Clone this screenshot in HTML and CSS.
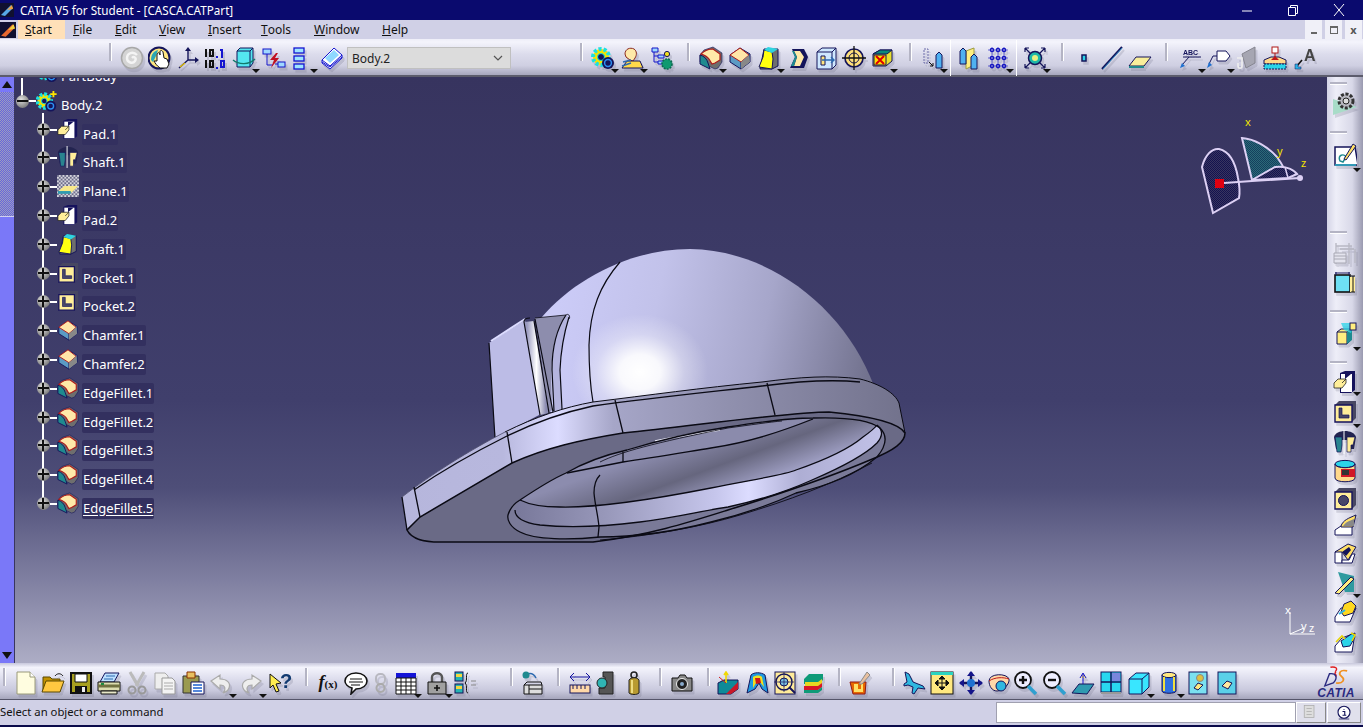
FILE: index.html
```html
<!DOCTYPE html>
<html lang="en">
<head>
<meta charset="utf-8">
<title>CATIA V5 for Student - [CASCA.CATPart]</title>
<link rel="stylesheet" href="styles.css">
</head>
<body>
<svg class="defs" width="0" height="0" aria-hidden="true">
<defs>
<pattern id="dith" width="4" height="4" patternUnits="userSpaceOnUse"><rect width="4" height="4" fill="#d4d4dc"/><rect width="2" height="2" fill="#6c6c8a"/><rect x="2" y="2" width="2" height="2" fill="#6c6c8a"/></pattern>
<pattern id="dithN" width="2" height="2" patternUnits="userSpaceOnUse"><rect width="2" height="2" fill="#38355f"/><rect width="1" height="1" fill="#14124f"/><rect x="1" y="1" width="1" height="1" fill="#14124f"/></pattern>
<pattern id="dithT" width="2" height="2" patternUnits="userSpaceOnUse"><rect width="2" height="2" fill="#2c6a78"/><rect width="1" height="1" fill="#143f5e"/><rect x="1" y="1" width="1" height="1" fill="#143f5e"/></pattern>
</defs>
<symbol id="spiral" viewBox="0 0 24 24"><circle cx="12" cy="12" r="10.5" fill="#d4d4d4" stroke="#a8a8a8" stroke-width="1.500"/><path d="M12 12c2-2 5 0 3 3s-8 2-8-3 6-7 10-3" fill="none" stroke="#f4f4f4" stroke-width="2.400"/></symbol>
<symbol id="hand" viewBox="0 0 24 24"><circle cx="11" cy="12" r="10.500" fill="#ffe680" stroke="#14145a" stroke-width="2"/><path d="M3 14c0-6 3-9 7-10l-2 6-3 6z" fill="#2ba7b5"/><path d="M12 22c-3-2-5-5-6-7l3 0V9c0-3 3-3 3 0V6c0-2 2-2 3 0l1 6 3 1 2 5-2 4z" fill="#fff" stroke="#111" stroke-width="1"/></symbol>
<symbol id="axes" viewBox="0 0 24 24"><path d="M12 14V3M12 14h9M12 14L3 22" fill="none" stroke="#14145a" stroke-width="1.400"/><path d="M12 1l-3 4h6zM23 14l-4-3v6z" fill="#14145a"/><path d="M4 21l5-4" stroke="#e6c200" stroke-width="1.200"/></symbol>
<symbol id="tennum" viewBox="0 0 24 24"><path d="M2 3h2v8H2zM6 3h5v8H6zM8 5v4h1V5zM2 14h2v8H2zM6 14h5v8H6zM8 16v4h1v-4z" fill="#111" fill-rule="evenodd"/><path d="M13 10h2v2h-2zM17 3h3v9h-2V5h-1zM13 21h2v2h-2zM17 14h5v8h-5zM19 16v4h1v-4z" fill="#1616d0" fill-rule="evenodd"/></symbol>
<symbol id="cyanbox" viewBox="0 0 24 24"><path d="M5 5l3-3h13v15l-3 4H5z" fill="#54e6f0" stroke="#14145a"/><path d="M5 5h13v16M18 5l3-3" fill="none" stroke="#14145a"/><path d="M1 14c6 5 16 5 22-1" fill="none" stroke="#127a6c" stroke-width="1.400"/></symbol>
<symbol id="bolt" viewBox="0 0 24 24"><rect x="1" y="3" width="8" height="5" fill="#9fd8ff" stroke="#1414c8"/><rect x="16" y="16" width="7" height="5" fill="#9fd8ff" stroke="#1414c8"/><path d="M5 8v11h6M16 18h-3" fill="none" stroke="#1414c8"/><path d="M14 7l-6 7h4l-3 8 8-10h-4l3-5z" fill="#c01020"/></symbol>
<symbol id="stack" viewBox="0 0 24 24"><g fill="#9fe4ff" stroke="#1414d0" stroke-width="1.300"><rect x="4" y="2" width="10" height="5"/><rect x="4" y="10" width="10" height="5"/><rect x="4" y="18" width="10" height="5"/></g></symbol>
<symbol id="book" viewBox="0 0 24 24"><path d="M2 14L14 2l8 7v3L10 23 2 17z" fill="#fff" stroke="#1414d0"/><path d="M2 14l8 6L22 9M2 16l8 5 12-10" fill="none" stroke="#1414d0"/><path d="M5 12l9-8 5 5-9 8z" fill="#8fd8ff"/></symbol>
<symbol id="gearc" viewBox="0 0 24 24"><circle cx="10" cy="11" r="8" fill="#f4e400" stroke="#1be0e0" stroke-width="4" stroke-dasharray="3 2"/><circle cx="10" cy="11" r="3.500" fill="#14145a" stroke="#1be0e0"/><circle cx="17" cy="17" r="6" fill="#14145a"/><circle cx="17" cy="17" r="3.400" fill="#14145a" stroke="#2d8df0" stroke-width="1.500"/></symbol>
<symbol id="bodygear" viewBox="0 0 24 24"><circle cx="9" cy="12" r="7.500" fill="#f4e400" stroke="#1be0e0" stroke-width="4" stroke-dasharray="3 2"/><circle cx="9" cy="12" r="3" fill="#14145a" stroke="#1be0e0"/><circle cx="16" cy="17.500" r="6" fill="#14145a"/><circle cx="16" cy="17.500" r="3.200" fill="#14145a" stroke="#2d8df0" stroke-width="1.500"/><path d="M19 1v7M15.500 4.500h7" stroke="#ffe600" stroke-width="2"/></symbol>
<symbol id="face" viewBox="0 0 24 24"><path d="M5 8c0-5 5-7 9-5 3 2 3 6 1 9l-2 3-3-1-4-3z" fill="#ffe9a8" stroke="#8a2a20"/><path d="M2 22l5-7h13l3 7z" fill="#ffd94a" stroke="#14145a"/><path d="M3 16l8-2M2 20l9-3" stroke="#2d6ab0" stroke-width="1.500"/></symbol>
<symbol id="treegear" viewBox="0 0 24 24"><path d="M2 2h6v4H2zM8 9h6v3H8zM8 15h6v3H8z" fill="#9fd8ff" stroke="#1414c8"/><path d="M4 6v10h4M4 10h4" fill="none" stroke="#1414c8"/><circle cx="17" cy="8" r="2.600" fill="#f0e020" stroke="#14145a"/><circle cx="17" cy="18" r="5" fill="#0f9a70" stroke="#0a6a50" stroke-width="1.600" stroke-dasharray="2 1"/></symbol>
<symbol id="fillet" viewBox="0 0 24 24"><path d="M1 9l4-5 9-3 9 6v9l-4 6-3 1-15-7z" fill="#6e6e6e" stroke="#14145a" stroke-width=".6"/><path d="M1 9c4 1 7 4 8 8l2 6-10-5z" fill="#1f8a8f" stroke="#14145a"/><path d="M2 8c3-3 8-5 12-5l7 5v6l-5 3-3 1-3-5c-2-3-5-4-8-5z" fill="#ffe9a8" stroke="#b01818" stroke-width="1.200"/></symbol>
<symbol id="solid2" viewBox="0 0 24 24"><path d="M2 9l10-7 10 6v8l-9 7-11-7z" fill="#5b9bc4" stroke="#14145a"/><path d="M2 9l10-7 9 7-8 7z" fill="#ffe6a8" stroke="#b01818"/><path d="M13 16v7" stroke="#14145a"/><path d="M21 9l1 7-9 7v-7z" fill="#888"/></symbol>
<symbol id="solid3" viewBox="0 0 24 24"><path d="M7 3h14v17l-6 3H3z" fill="#6e6e6e" stroke="#14145a"/><path d="M7 4l8 2 1 7-1 10-13-2 4-10z" fill="#ffff10" stroke="#14145a"/><path d="M7 4l4-3 10 2-6 4z" fill="#2fd4e0"/></symbol>
<symbol id="solid4" viewBox="0 0 24 24"><path d="M6 3h12l4 8-4 11H4l5-11z" fill="#14145a"/><path d="M8 5h6l4 6-4 9H8l3-9z" fill="#ffe9a8"/><path d="M6 5l2 0 3 6-3 9H5l4-9z" fill="#1f8a8f"/></symbol>
<symbol id="grid3d" viewBox="0 0 24 24"><path d="M3 6l5-4h14v17l-4 4H3z" fill="#cfe8ff" stroke="#14145a"/><path d="M3 6h15v17M18 6l4-4" fill="none" stroke="#14145a"/><path d="M7 10h4v9H7z" fill="#ffe680" stroke="#14145a"/><path d="M8 14h12M17 11l3 3-3 3" fill="none" stroke="#2d6ab0" stroke-width="1.400"/></symbol>
<symbol id="target" viewBox="0 0 24 24"><circle cx="12" cy="12" r="9" fill="#ffe07a" stroke="#14145a" stroke-width="1.600"/><circle cx="12" cy="12" r="5" fill="none" stroke="#14145a"/><path d="M12 0v24M0 12h24" stroke="#111" stroke-width="1.300"/></symbol>
<symbol id="cubex" viewBox="0 0 24 24"><path d="M3 8l7-4h12v11l-6 5H3z" fill="#e8e030" stroke="#14145a"/><path d="M3 8h14l5-4H10z" fill="#0b8a78" stroke="#14145a"/><path d="M4 9h12v10H4z" fill="#ffe000" stroke="#14145a"/><path d="M6 10l8 8M14 10l-8 8" stroke="#d00" stroke-width="2"/></symbol>
<symbol id="dashed" viewBox="0 0 24 24"><path d="M4 3h4v14H4z" fill="none" stroke="#6a6aa8" stroke-dasharray="2 1"/><path d="M16 9l3-3 3 3v13h-6z" fill="#4fb0f0" stroke="#14145a"/><path d="M9 16l4 4M13 17v3h-3" stroke="#111" fill="none"/></symbol>
<symbol id="planes" viewBox="0 0 24 24"><path d="M8 5l8-3v17l-8 4z" fill="#ffee80" stroke="#9a9a40"/><path d="M2 5l3-3 3 3v13H2z" fill="#4fb0f0" stroke="#14145a"/><path d="M13 11l3-3 3 3v12h-6z" fill="#4fb0f0" stroke="#14145a"/></symbol>
<symbol id="dots" viewBox="0 0 24 24"><path d="M2 4h20M2 12h20M2 20h20M6 1v22M12 1v22M18 1v22" stroke="#1414c0" fill="none" stroke-width=".6"/><g fill="none" stroke="#1414c0" stroke-width="1.200"><circle cx="6" cy="4" r="1.700"/><circle cx="12" cy="4" r="1.700"/><circle cx="18" cy="4" r="1.700"/><circle cx="6" cy="12" r="1.700"/><circle cx="12" cy="12" r="1.700"/><circle cx="18" cy="12" r="1.700"/><circle cx="6" cy="20" r="1.700"/><circle cx="12" cy="20" r="1.700"/><circle cx="18" cy="20" r="1.700"/></g></symbol>
<symbol id="center" viewBox="0 0 24 24"><path d="M2 2l5 5M22 2l-5 5M2 22l5-5M22 22l-5-5M2 2h4M2 2v4M22 2h-4M22 2v4M2 22h4M2 22v-4M22 22h-4M22 22v-4" stroke="#14145a" fill="none" stroke-width="1.200"/><circle cx="12" cy="12" r="6.500" fill="#1fb8a8" stroke="#14145a" stroke-width="1.500"/><circle cx="12" cy="12" r="3" fill="#e8f080"/></symbol>
<symbol id="point" viewBox="0 0 24 24"><rect x="10" y="9" width="4" height="6" fill="#2bd4e8" stroke="#14145a" stroke-width="1.500"/></symbol>
<symbol id="line" viewBox="0 0 24 24"><path d="M2 23L22 1" stroke="#14145a" stroke-width="2"/><path d="M3 23L22 2" stroke="#2bb4e8" stroke-width=".7"/></symbol>
<symbol id="plane" viewBox="0 0 24 24"><path d="M1 20l7-9h15l-7 9z" fill="#f8ee9a" stroke="#14145a"/><path d="M1 21h15" stroke="#1f8a8f" stroke-width="2"/></symbol>
<symbol id="flag" viewBox="0 0 24 24"><path d="M10 5h9l4 5-4 5h-9z" fill="#fff" stroke="#14145a"/><path d="M10 10H6L2 18" stroke="#14145a" fill="none"/><path d="M0 22l2-6 3 3z" fill="#1f70d0"/></symbol>
<symbol id="graybolt" viewBox="0 0 24 24"><path d="M8 8l13-7v16l-9 5z" fill="#a6a6b2" stroke="#85858f"/><path d="M3 12h5v8c0 3-4 3-4 0v-3" fill="none" stroke="#eee" stroke-width="1.600"/></symbol>
<symbol id="stamp" viewBox="0 0 24 24"><rect x="9" y="1" width="6" height="6" fill="#fff" stroke="#b01818"/><path d="M12 7v5" stroke="#b01818"/><path d="M1 14l7-3h8l7 3v4H1z" fill="#ffd88a" stroke="#14145a"/><path d="M8 14l4-4 4 4z" fill="#c01818"/><rect x="1" y="18" width="22" height="5" fill="#2bd4e8" stroke="#14145a" stroke-dasharray="2 1"/></symbol>
<symbol id="gearg" viewBox="0 0 24 24"><path d="M0 8l24 8-24 8z" fill="#a8dcc8"/><circle cx="13" cy="10" r="7" fill="#b8b8c0" stroke="#333" stroke-width="3" stroke-dasharray="3 1.600"/><circle cx="13" cy="10" r="3" fill="#ddd" stroke="#222"/></symbol>
<symbol id="sketch" viewBox="0 0 24 24"><path d="M2 4h20l3 18H2z" fill="#fff" stroke="#14145a" stroke-width="1.500"/><path d="M7 18c-3-6 4-8 6-4l-3 5z" fill="none" stroke="#1f8a8f" stroke-width="1.500"/><path d="M11 16L20 1l3 2-10 14z" fill="#ffe066" stroke="#14145a"/><path d="M2 22h21" stroke="#2bb4c8" stroke-width="1.500"/></symbol>
<symbol id="graytool" viewBox="0 0 24 24"><path d="M3 2v21M3 5h16M16 2v21M22 8v14M7 8h14" stroke="#b8b8c4" fill="none" stroke-width="1.400"/><path d="M1 12h12v10H1z" fill="#e4e4ee" stroke="#a8a8b4"/><path d="M1 15h12M1 18h12" stroke="#a8a8b4"/></symbol>
<symbol id="cyansq" viewBox="0 0 24 24"><rect x="2" y="5" width="15" height="17" fill="#6ee0f4" stroke="#111" stroke-width="1.600"/><path d="M3 2v3M16 2v3M2 3h15" stroke="#1a1a60"/><rect x="17" y="7" width="5" height="15" fill="#ffee9a"/><path d="M20 6v16M18 6h4M18 22h4" stroke="#111"/></symbol>
<symbol id="cubeflag" viewBox="0 0 24 24"><path d="M4 10l4-3h10v11l-4 4H4z" fill="#ffee80" stroke="#14145a"/><path d="M14 10h-10M14 10v12M14 10l4-3" fill="none" stroke="#14145a"/><path d="M14 10l5-2v10l-5 4z" fill="#1f8a8f"/><path d="M8 1l13 0-3 10-7-3z" fill="#2bd4e8" opacity=".75"/><rect x="17" y="1" width="6" height="7" fill="#ffee80" stroke="#14145a"/></symbol>
<symbol id="pad" viewBox="0 0 24 24"><path d="M7 3l5-2h10v19l-4 3H7z" fill="#15125c"/><path d="M8 4h11v18H8z" fill="#fff"/><path d="M1 13l4-4h8v4l-4 5H1z" fill="#ffee99" stroke="#222" stroke-width=".8"/><path d="M9 13l4-4" stroke="#222" stroke-width=".8"/><path d="M12 4h6l-6 5z" fill="#15125c"/></symbol>
<symbol id="pocket" viewBox="0 0 24 24"><path d="M2 5l4-4h17v17l-4 4H2z" fill="#474762"/><path d="M2 5h17v17H2z" fill="#ffee99" stroke="#15125c" stroke-width="1.400"/><path d="M6 8h3v7h7v3H6z" fill="#474768" stroke="#15125c" stroke-width=".7"/></symbol>
<symbol id="shaft" viewBox="0 0 24 24"><path d="M1 7c2-8 20-8 22 0l-2 12h-5l-1-9h-6l-1 9H3z" fill="#232450"/><path d="M2 7h7v8l-1 7H4z" fill="#29848f" stroke="#14145a" stroke-width=".7"/><path d="M14 7h8l-2 8h-2v7h-4z" fill="#ffee99" stroke="#14145a" stroke-width=".7"/><path d="M11 0v24" stroke="#fff"/></symbol>
<symbol id="groove" viewBox="0 0 24 24"><ellipse cx="12" cy="5" rx="10" ry="3.600" fill="#2bd4e8" stroke="#14145a"/><path d="M2 5v14c0 5 20 5 20 0V5c0 5-20 5-20 0z" fill="#ffd88a" stroke="#14145a"/><path d="M8 10h14v8H8z" fill="#d01828"/><path d="M9 11h7v5H9z" fill="#333"/></symbol>
<symbol id="hole" viewBox="0 0 24 24"><path d="M2 5l4-4h17v17l-4 4H2z" fill="#474762"/><path d="M2 5h17v17H2z" fill="#ffee99" stroke="#15125c" stroke-width="1.400"/><circle cx="10.500" cy="13.500" r="5" fill="#474768" stroke="#15125c"/></symbol>
<symbol id="rib" viewBox="0 0 24 24"><path d="M2 21v-5l6-4 11 0 0 9z" fill="#fff" stroke="#14145a"/><path d="M8 12c2-6 8-8 15-11l-3 12-12 0z" fill="#ffe066" stroke="#14145a"/><path d="M10 12c3-4 6-5 11-7v7z" fill="#888"/></symbol>
<symbol id="slot" viewBox="0 0 24 24"><path d="M2 21V10l7-3 0 14z" fill="#fff" stroke="#14145a"/><path d="M9 21h10l3-9-3 0-3 6H9z" fill="#fff" stroke="#14145a"/><path d="M2 10l13-8 8 3-8 13-6-8z" fill="#ffe066" stroke="#14145a"/><path d="M9 10l7-5 2 3-5 6z" fill="#14145a"/></symbol>
<symbol id="stiff" viewBox="0 0 24 24"><path d="M5 1l16 4v16H12z" fill="#2f9a9f"/><path d="M2 22L18 6l3 2-15 15z" fill="#ffee80" stroke="#14145a"/></symbol>
<symbol id="loft" viewBox="0 0 24 24"><path d="M2 22v-5l6-9 15 0-6 14z" fill="#fff" stroke="#14145a"/><path d="M8 12l3-8 7-3 5 5-3 7-9 3z" fill="#ffd820" stroke="#14145a"/><path d="M6 14l6-4" stroke="#2bb4e8" stroke-width="2"/></symbol>
<symbol id="loft2" viewBox="0 0 24 24"><path d="M2 22v-6l7-8 13-5-3 19z" fill="#fff" stroke="#14145a"/><path d="M8 11l12-8 2 4-5 9-7 1z" fill="#2bd4e8" stroke="#14145a"/><path d="M3 12l6-6 3 3M18 3l4 2-3 6" fill="none" stroke="#e8d400" stroke-width="1.600"/></symbol>
<symbol id="sfile" viewBox="0 0 24 24"><path d="M3 1h13l5 5v17H3z" fill="#fffde0" stroke="#9a9a7a"/><path d="M16 1v5h5" fill="#fff" stroke="#9a9a7a"/></symbol>
<symbol id="sfolder" viewBox="0 0 24 24"><path d="M2 6h7l2 2h8v12H2z" fill="#c09000" stroke="#5a4800"/><path d="M5 10h18l-4 11H1z" fill="#ffc840" stroke="#5a4800"/><path d="M14 5c2-3 6-3 8 0" fill="none" stroke="#222"/></symbol>
<symbol id="sdisk" viewBox="0 0 24 24"><path d="M2 2h20v20H2z" fill="#a8a020" stroke="#111" stroke-width="2"/><path d="M6 3h12v8H6z" fill="#fff" stroke="#111"/><path d="M6 15h12v7H6z" fill="#111"/><path d="M13 16h3v5h-3z" fill="#eee"/></symbol>
<symbol id="sprint" viewBox="0 0 24 24"><path d="M8 2h14l-5 9H3z" fill="#bde0ff" stroke="#14145a"/><path d="M9 5h9M7 8h9" stroke="#2d6ab0"/><path d="M1 11h22v9H1z" fill="#dcdcb0" stroke="#111"/><path d="M1 15h22" stroke="#707040" stroke-width="3"/><path d="M4 20h16v3H4z" fill="#e8e8c8" stroke="#111"/><rect x="4" y="12" width="3" height="2" fill="#1c8a40"/></symbol>
<symbol id="scut" viewBox="0 0 24 24"><path d="M5 1l8 14M19 1l-8 14" stroke="#bbb" stroke-width="3"/><circle cx="7" cy="19" r="3.500" fill="none" stroke="#999" stroke-width="2"/><circle cx="17" cy="19" r="3.500" fill="none" stroke="#999" stroke-width="2"/></symbol>
<symbol id="scopy" viewBox="0 0 24 24"><path d="M2 2h10l3 3v13H2z" fill="#eee" stroke="#aaa"/><path d="M9 7h10l3 3v13H9z" fill="#f4f4f4" stroke="#999"/><path d="M11 12h9M11 15h9M11 18h9" stroke="#aaa"/></symbol>
<symbol id="spaste" viewBox="0 0 24 24"><path d="M2 5h16v17H2z" fill="#9a9a50" stroke="#333"/><path d="M6 1h8v6H6z" fill="#e8c060" stroke="#8a3000"/><path d="M10 11h13v12H10z" fill="#fff" stroke="#14145a"/><path d="M12 14h9M12 17h9M12 20h9" stroke="#1c60d0" stroke-width="1.500"/></symbol>
<symbol id="sundo" viewBox="0 0 24 24"><path d="M2 10l9-6v4c7 0 11 4 9 9-1 3-3 4-6 5 3-3 3-8-3-8v4z" fill="#eee" stroke="#aaa" stroke-width="1.200"/></symbol>
<symbol id="sredo" viewBox="0 0 24 24"><path d="M22 10l-9-6v4C6 8 2 12 4 17c1 3 3 4 6 5-3-3-3-8 3-8v4z" fill="#eee" stroke="#aaa" stroke-width="1.200"/></symbol>
<symbol id="ssay" viewBox="0 0 24 24"><path d="M12 2c7 0 11 4 11 8s-4 8-11 8l-5 5 1-6C4 16 1 13 1 10c0-4 4-8 11-8z" fill="#fff" stroke="#111" stroke-width="1.600"/><path d="M6 8h12M5 11h14M7 14h9" stroke="#111"/></symbol>
<symbol id="slink" viewBox="0 0 24 24"><rect x="7" y="3" width="9" height="10" rx="4" fill="none" stroke="#b8b8c0" stroke-width="2"/><circle cx="11.500" cy="17" r="4" fill="none" stroke="#aaa" stroke-width="2"/></symbol>
<symbol id="stable" viewBox="0 0 24 24"><rect x="2" y="2" width="20" height="5" fill="#1414d8"/><path d="M2 7h20v16H2z" fill="#fff" stroke="#111"/><path d="M2 11h20M2 15h20M2 19h20M7 7v16M12 7v16M17 7v16" stroke="#111"/></symbol>
<symbol id="slock" viewBox="0 0 24 24"><path d="M7 11V6c0-5 10-5 10 0v5" fill="none" stroke="#555" stroke-width="2.400"/><path d="M3 11h18v12H3z" fill="#a0a0a0" stroke="#111"/><path d="M12 14v6M9 17h6" stroke="#111" stroke-width="1.600"/></symbol>
<symbol id="sformula" viewBox="0 0 24 24"><rect x="1" y="1" width="8" height="9" fill="#26b4b4" stroke="#14145a"/><rect x="1" y="13" width="8" height="9" fill="#26b4b4" stroke="#14145a"/><rect x="2" y="3" width="6" height="3" fill="#f4d840"/><rect x="2" y="15" width="6" height="3" fill="#f4d840"/><path d="M14 2c-3 0 0 8-3 10 3 2 0 10 3 10" fill="none" stroke="#111"/><path d="M17 10h5M17 14h5" stroke="#888"/></symbol>
<symbol id="sswap" viewBox="0 0 24 24"><path d="M3 7c3-6 9-6 12 0" fill="none" stroke="#2d6ab0" stroke-width="1.500"/><circle cx="5" cy="4" r="3.500" fill="#1f8a8f"/><path d="M3 14h18v9H3z" fill="#ddd" stroke="#111"/><path d="M3 14l3-3h14l1 3M8 14v9M8 18h13" fill="none" stroke="#111"/></symbol>
<symbol id="smeasure" viewBox="0 0 24 24"><path d="M2 6h20M2 6l4-4M2 6l4 4M22 6l-4-4M22 6l-4 4" stroke="#1414a0" fill="none"/><rect x="2" y="14" width="20" height="8" fill="#ffd8a8" stroke="#14145a"/><path d="M5 14v4M9 14v4M13 14v4M17 14v4" stroke="#14145a"/></symbol>
<symbol id="sclamp" viewBox="0 0 24 24"><path d="M8 1h10v22H4v-6h6V6H8z" fill="#555" stroke="#222"/><circle cx="7" cy="12" r="5" fill="#2fb4b4" stroke="#222"/></symbol>
<symbol id="sweight" viewBox="0 0 24 24"><circle cx="12" cy="4" r="3" fill="none" stroke="#222" stroke-width="1.600"/><path d="M7 9c2-3 8-3 10 0v13c-2 2-8 2-10 0z" fill="#b89a30" stroke="#222"/><path d="M10 9v13" stroke="#eedc80" stroke-width="2"/></symbol>
<symbol id="scam" viewBox="0 0 24 24"><path d="M2 7h6l2-3h5l2 3h5v13H2z" fill="#888" stroke="#111"/><circle cx="12" cy="13" r="5.500" fill="#222" stroke="#eee"/><circle cx="12" cy="13" r="2" fill="#8ac"/></symbol>
<symbol id="smat" viewBox="0 0 24 24"><path d="M2 12l6-3h14v9l-7 5H2z" fill="#0e8a98" stroke="#14145a"/><path d="M10 23l12-12v7l-7 5z" fill="#c81828"/><path d="M10 12V2M8 4l2-3 2 3" stroke="#f0d800" fill="none" stroke-width="1.600"/><path d="M10 12L3 6" stroke="#d01818"/></symbol>
<symbol id="smap" viewBox="0 0 24 24"><path d="M2 22L6 4c3-3 10-3 14 0l3 18-6-4-3-6-4 6z" fill="#1f9ae0" stroke="#14145a"/><path d="M8 6c3-2 7-2 9 0l2 10-4-5-4 1-3 5z" fill="#f0e020"/><path d="M10 7l5 0 1 5-5 1z" fill="#d01818"/></symbol>
<symbol id="sscan" viewBox="0 0 24 24"><rect x="2" y="1" width="20" height="22" fill="#ffeb9a" stroke="#14145a"/><circle cx="11" cy="11" r="8" fill="none" stroke="#14145a" stroke-width="1.400"/><circle cx="11" cy="11" r="4" fill="#7ac0e0" stroke="#14145a"/><path d="M11 1v20M1 11h20" stroke="#14145a" stroke-width=".7"/><path d="M16 16l6 6" stroke="#14145a" stroke-width="2"/></symbol>
<symbol id="slayers" viewBox="0 0 24 24"><path d="M3 8l5-5h14v6l-5 4H3z" fill="#0e9a78"/><path d="M4 11l13 0 4-3v4l-4 4H4z" fill="#e8d820"/><path d="M3 15h14l4-3v4l-4 3H3z" fill="#d81828"/><path d="M3 19h14l4-3v3l-4 3H3z" fill="#0e9a78"/></symbol>
<symbol id="sbrush" viewBox="0 0 24 24"><path d="M3 11h16l-1 12H6z" fill="#e86800" stroke="#901818"/><path d="M7 13h4v5h3v-5h2v8H7z" fill="#ffe066"/><path d="M12 13L20 1l3 3-8 9z" fill="#e8c0a0" stroke="#888"/></symbol>
<symbol id="sfly" viewBox="0 0 24 24"><path d="M3 1l4 2 4 8 10 4 2 3-7-1-4 6-2-1 1-6-5-2-4 1 0-2 3-2z" fill="#2fb8e0" stroke="#14145a"/></symbol>
<symbol id="sfit" viewBox="0 0 24 24"><rect x="1" y="1" width="22" height="22" fill="#ffe880" stroke="#111"/><rect x="1" y="1" width="22" height="3" fill="#2bd4c0"/><path d="M12 5v14M5 12h14M12 5l-3 3h6zM12 19l-3-3h6zM5 12l3-3v6zM19 12l-3-3v6z" stroke="#111" fill="#111"/></symbol>
<symbol id="span" viewBox="0 0 24 24"><path d="M12 1v22M1 12h22" stroke="#14145a" stroke-width="2.400"/><path d="M12 0l-4 5h8zM12 24l-4-5h8zM0 12l5-4v8zM24 12l-5-4v8z" fill="#14148a"/><circle cx="12" cy="12" r="4" fill="#1f70d0"/></symbol>
<symbol id="srot" viewBox="0 0 24 24"><path d="M2 10c0-8 18-8 20-2 1 5-6 12-12 12-5 0-8-5-8-10z" fill="#ffd8a8" stroke="#14145a"/><path d="M2 10c6-4 14-4 20-2" fill="none" stroke="#c01818"/><circle cx="14" cy="15" r="5" fill="#2fb8e0" stroke="#14145a"/></symbol>
<symbol id="szoomi" viewBox="0 0 24 24"><circle cx="9" cy="9" r="8" fill="#eef" stroke="#111" stroke-width="1.800"/><path d="M5 9h8M9 5v8" stroke="#111" stroke-width="2.400"/><path d="M14 15l8 8" stroke="#2fa0d0" stroke-width="3.500"/></symbol>
<symbol id="szoomo" viewBox="0 0 24 24"><circle cx="9" cy="9" r="8" fill="#eef" stroke="#111" stroke-width="1.800"/><path d="M5 9h8" stroke="#111" stroke-width="2.400"/><path d="M14 15l8 8" stroke="#2fa0d0" stroke-width="3.500"/></symbol>
<symbol id="snormal" viewBox="0 0 24 24"><path d="M12 14V3M9 7l3-5 3 5" stroke="#1414d0" fill="#ffe880"/><path d="M1 22l7-9h15l-7 10z" fill="#2f9ab0" stroke="#14145a"/></symbol>
<symbol id="sview" viewBox="0 0 24 24"><rect x="2" y="1" width="20" height="20" fill="#29d8f0" stroke="#14145a"/><path d="M12 1v20M2 11h20" stroke="#14145a" stroke-width="1.500"/><rect x="13" y="2" width="8" height="8" fill="#b050d0" opacity=".6"/><path d="M2 22h20" stroke="#999" stroke-width="2"/></symbol>
<symbol id="scube" viewBox="0 0 24 24"><path d="M2 8l7-6h13v14l-7 7H2z" fill="#39e6ff" stroke="#14145a"/><path d="M2 8h13v15M15 8l7-6" fill="none" stroke="#14145a"/></symbol>
<symbol id="scyl" viewBox="0 0 24 24"><path d="M5 4v16c0 3 14 3 14 0V4z" fill="#2f70e0" stroke="#14145a"/><ellipse cx="12" cy="4" rx="7" ry="2.600" fill="#ffe880" stroke="#14145a"/><path d="M7 6v14M17 6v14" stroke="#f0e040" stroke-width="2"/></symbol>
<symbol id="sdoc1" viewBox="0 0 24 24"><rect x="3" y="1" width="18" height="22" fill="#7ae0f0" stroke="#14145a"/><path d="M8 17l4-5 5 2-5 5z" fill="#ffe880" stroke="#14145a"/><circle cx="14" cy="7" r="3.500" fill="#ddc040" stroke="#888"/></symbol>
<symbol id="sdoc2" viewBox="0 0 24 24"><rect x="3" y="1" width="18" height="22" fill="#5ad0e8" stroke="#14145a"/><path d="M7 15l5-5 5 2-4 6z" fill="#ffe8a0" stroke="#14145a"/></symbol>
<symbol id="sstack" viewBox="0 0 24 24"><rect x="3" y="2" width="13" height="16" fill="#ddd" stroke="#aaa"/><path d="M6 6h7M6 10h7M6 14h7" stroke="#aaa"/></symbol>
<symbol id="sinfo" viewBox="0 0 24 24"><circle cx="12" cy="11" r="8" fill="#fff" stroke="#14145a" stroke-width="1.500"/><path d="M12 7v1M10 10h3v5h2M10 15h3" stroke="#14145a" stroke-width="1.500" fill="none"/><path d="M5 20h14" stroke="#14145a"/></symbol>
</svg>

<header class="titlebar">
  <svg class="app-icon" viewBox="0 0 14 14"><rect width="14" height="14" fill="#101030"/><path d="M1 12L11 2l2 3-8 8z" fill="#58a8e8"/><path d="M7 7l5-5 1 4z" fill="#f0a040"/></svg>
  <span class="title-text">CATIA V5 for Student - [CASCA.CATPart]</span>
  <div class="win-btns">
    <svg class="win-btn" viewBox="0 0 46 20"><path d="M18 11h10" stroke="#fff"/></svg>
    <svg class="win-btn" viewBox="0 0 46 20"><path d="M18.500 7.500h7v8h-7zM20.500 7.500v-2h7v8h-2" fill="none" stroke="#fff"/></svg>
    <svg class="win-btn" viewBox="0 0 46 20"><path d="M18 4l10 12M28 4L18 16" stroke="#fff"/></svg>
  </div>
</header>

<nav class="menubar">
  <svg class="app-icon menu-icon" viewBox="0 0 14 14"><rect width="14" height="14" fill="#101030"/><path d="M1 12L11 2l2 3-8 8z" fill="#e86830"/><path d="M7 7l5-5 1 4z" fill="#f0d040"/></svg>
  <span class="menu start"><u>S</u>tart</span>
  <span class="menu file"><u>F</u>ile</span>
  <span class="menu edit"><u>E</u>dit</span>
  <span class="menu view"><u>V</u>iew</span>
  <span class="menu insert"><u>I</u>nsert</span>
  <span class="menu tools"><u>T</u>ools</span>
  <span class="menu window"><u>W</u>indow</span>
  <span class="menu help"><u>H</u>elp</span>
  <div class="mdi">
    <span class="mdi-btn"><i class="mdi-min"></i></span>
    <span class="mdi-btn"><i class="mdi-res"></i></span>
    <span class="mdi-btn mdi-x">x</span>
  </div>
</nav>

<div class="toolbar top">
  <div class="tgroup ga">
    <i class="grip"></i>
    <span class="ic"><svg><use href="#spiral"/></svg></span>
    <span class="ic"><svg><use href="#hand"/></svg></span>
    <span class="ic"><svg><use href="#axes"/></svg></span>
    <span class="ic w26"><svg><use href="#tennum"/></svg></span>
    <span class="ic w32 dd"><svg><use href="#cyanbox"/></svg></span>
    <span class="ic"><svg><use href="#bolt"/></svg></span>
    <span class="ic dd"><svg><use href="#stack"/></svg></span>
    <span class="ic w31"><svg><use href="#book"/></svg></span>
    <div class="body-select"><span>Body.2</span><svg class="chev" viewBox="0 0 10 6"><path d="M1 1l4 4 4-4" fill="none" stroke="#555" stroke-width="1.200"/></svg></div>
  </div>
  <div class="tgroup gb">
    <i class="grip"></i>
    <span class="ic dd"><svg><use href="#gearc"/></svg></span>
    <span class="ic w30 dd"><svg><use href="#face"/></svg></span>
    <span class="ic w30"><svg><use href="#treegear"/></svg></span>
  </div>
  <div class="tgroup gc">
    <i class="grip"></i>
    <span class="ic w29 dd"><svg><use href="#fillet"/></svg></span>
    <span class="ic w29"><svg><use href="#solid2"/></svg></span>
    <span class="ic w29 dd"><svg><use href="#solid3"/></svg></span>
    <span class="ic w29"><svg><use href="#solid4"/></svg></span>
    <span class="ic"><svg><use href="#grid3d"/></svg></span>
    <span class="ic"><svg><use href="#target"/></svg></span>
    <span class="ic dd"><svg><use href="#cubex"/></svg></span>
  </div>
  <div class="tgroup gd">
    <i class="grip"></i>
    <span class="ic dd"><svg><use href="#dashed"/></svg></span>
    <i class="vsep"></i>
    <span class="ic w29"><svg><use href="#planes"/></svg></span>
    <span class="ic dd"><svg><use href="#dots"/></svg></span>
    <i class="vsep"></i>
    <span class="ic dd"><svg><use href="#center"/></svg></span>
  </div>
  <div class="tgroup ge">
    <i class="grip"></i>
    <span class="ic"><svg><use href="#point"/></svg></span>
    <span class="ic"><svg><use href="#line"/></svg></span>
    <span class="ic"><svg><use href="#plane"/></svg></span>
  </div>
  <div class="tgroup gf">
    <i class="grip"></i>
    <span class="ic w32 dd"><svg viewBox="0 0 24 24"><text x="5" y="9" class="tiny">ABC</text><path d="M5 11h18M11 11l-7 8" stroke="#14145a" fill="none"/><path d="M2 22l2-5 3 3z" fill="#1f70d0"/></svg></span>
    <span class="ic w26 dd"><svg><use href="#flag"/></svg></span>
    <span class="ic"><svg><use href="#graybolt"/></svg></span>
    <span class="ic w30"><svg><use href="#stamp"/></svg></span>
    <span class="ic w30"><svg viewBox="0 0 24 24"><text x="11" y="15" class="big">A</text><path d="M9 14l-5 6" stroke="#111" stroke-width="1.600"/><path d="M2 23v-5h3v3h3v2z" fill="#2bb4e8" stroke="#14145a" stroke-width=".5"/></svg></span>
  </div>
</div>

<main class="workspace">
  <div class="scrollbar">
    <span class="sb-btn"><i class="tri-up"></i></span>
    <span class="sb-thumb"></span>
    <span class="sb-track"></span>
    <span class="sb-btn"><i class="tri-down"></i></span>
  </div>

  <section class="viewport">
    <svg class="model" viewBox="15 77 1312 586" width="1312" height="586">
      <defs>
        <linearGradient id="domeG" gradientUnits="userSpaceOnUse" x1="560" y1="300" x2="870" y2="365"><stop offset="0" stop-color="#cbcbf7"/><stop offset=".3" stop-color="#c2c2ea"/><stop offset=".65" stop-color="#a6a6ca"/><stop offset="1" stop-color="#72728e"/></linearGradient>
        <radialGradient id="specG"><stop offset="0" stop-color="#fff"/><stop offset=".3" stop-color="#fff" stop-opacity=".9"/><stop offset=".65" stop-color="#fff" stop-opacity=".3"/><stop offset="1" stop-color="#fff" stop-opacity="0"/></radialGradient>
        <linearGradient id="bandG" gradientUnits="userSpaceOnUse" x1="402" y1="0" x2="905" y2="0"><stop offset="0" stop-color="#b6b6dc"/><stop offset=".2" stop-color="#b8b8de"/><stop offset=".31" stop-color="#dcdcff"/><stop offset=".42" stop-color="#a6a6c8"/><stop offset=".65" stop-color="#9090ae"/><stop offset="1" stop-color="#72728c"/></linearGradient>
        <linearGradient id="ringG" gradientUnits="userSpaceOnUse" x1="515" y1="0" x2="880" y2="0"><stop offset="0" stop-color="#78789a"/><stop offset=".25" stop-color="#9898ba"/><stop offset=".55" stop-color="#c6c6ec"/><stop offset=".64" stop-color="#dcdcff"/><stop offset=".78" stop-color="#aeaed4"/><stop offset="1" stop-color="#c0c0e6"/></linearGradient>
        <linearGradient id="wallG" gradientUnits="userSpaceOnUse" x1="700" y1="435" x2="722" y2="495"><stop offset="0" stop-color="#8c8cae"/><stop offset=".55" stop-color="#66667e"/><stop offset="1" stop-color="#9c9cc0"/></linearGradient>
        <linearGradient id="ribG" gradientUnits="userSpaceOnUse" x1="527" y1="0" x2="546" y2="0"><stop offset="0" stop-color="#9a9ac0"/><stop offset=".5" stop-color="#fff"/><stop offset="1" stop-color="#8a8ab0"/></linearGradient>
      </defs>
      <path d="M541 318C575 278 632 249 690 249C770 250 845 308 874 386L600 412L545 412Z" fill="url(#domeG)"/>
      <ellipse cx="640" cy="372" rx="68" ry="58" fill="url(#specG)"/>
      <path d="M489 343L525 320L541 414L495 438Z" fill="#bcbce6"/>
      <path d="M491 341L525 319" stroke="#dcdcff" stroke-width="2" fill="none"/>
      <path d="M535 318L566 315C556 330 552 350 551 375L552 410L549 413Z" fill="#8d8dad"/>
      <path d="M566 315C556 330 552 350 552 370L554 411L562 409L560 370C561 345 565 330 569 317Z" fill="#b4b4de"/>
      <path d="M524 322L540 415L549 413L534 321Z" fill="url(#ribG)"/>
      <g fill="none" stroke="#0a0a14" stroke-width="1.200">
        <path d="M620 262C600 285 590 310 589 345C589 365 590 385 593 402"/>
        <path d="M489 343L495 438"/>
        <path d="M524 322L540 415M534 321L549 413M530 318C526 318 524 320 524 322"/>
        <path d="M535 319L553 412M566 315C556 330 552 350 552 370L554 411M569 317C565 330 561 345 560 370L562 409"/>
        <path d="M535 318L566 315C568 313 571 316 569 319" stroke-width=".8"/>
      </g>
      <path d="M402 497C430 475 470 450 505 432C535 417 565 407 593 402C650 395 700 388 762 382C800 377 830 375 860 379C880 384 895 393 899 403L905 433C900 425 880 417 829 412C790 412 700 425 623 433C580 440 545 448 512 463L420 517L407 530Z" fill="url(#bandG)"/>
      <path d="M407 530C412 540 425 542 440 542L593 542C650 535 690 522 728 510C770 497 830 477 870 460C895 450 905 442 905 433C900 425 880 417 829 412C790 412 700 425 623 433C580 440 545 448 512 463L420 517Z" fill="#6a6a86"/>
      <path d="M508 515C510 508 515 503 520 500C535 490 550 480 566 473C585 462 605 455 627 450C660 440 695 432 728 427C760 422 790 418 813 418C845 417 870 420 880 428C887 435 887 445 877 457C855 475 830 485 796 493C770 505 740 515 711 522C680 530 640 537 600 537C570 540 535 540 520 532C510 527 507 520 508 515Z" fill="#7a7a98"/>
      <path d="M520 500C535 490 550 480 566 473C585 462 605 455 627 450C660 440 695 432 728 427C760 422 790 418 813 418C845 417 870 420 877 425C875 428 870 432 863 437C850 448 825 460 796 470C785 475 750 480 711 488C660 498 600 508 560 507C545 507 530 505 520 500Z" fill="url(#wallG)"/>
      <path d="M520 500C530 505 545 507 560 507C600 508 660 498 711 488C750 480 785 475 796 470C825 460 850 448 863 437C870 432 875 428 877 425C883 430 883 436 877 443C865 455 840 468 812 480C790 490 760 500 728 507C700 511 680 517 640 522C600 527 570 528 540 525C525 523 515 518 515 510Z" fill="url(#ringG)"/>
      <path d="M600 462C620 452 654 443 728 428C750 425 770 422 813 418C780 432 750 442 711 448C680 453 650 458 623 462Z" fill="#8b8bac"/>
      <path d="M655 441C680 436 700 433 720 430" stroke="#f2f2ff" stroke-width="1.500" fill="none"/>
      <g fill="none" stroke="#0a0a14" stroke-width="1.300">
        <path d="M402 497C430 475 470 450 505 432" stroke="#4a4a68" stroke-width=".8"/>
        <path d="M414 490C440 472 475 452 507 436C540 420 565 412 593 406C650 398 700 393 762 386C800 381 830 379 860 382"/>
        <path d="M505 432C535 417 565 407 593 402C650 395 700 388 762 382C800 377 830 375 860 379C880 384 895 393 899 403L905 433" stroke-width="1"/>
        <path d="M402 497L407 530"/>
        <path d="M414 487L420 517M507 432L512 463M615 400L623 433M767 383L775 415"/>
        <path d="M407 530C412 540 425 542 440 542L593 542C650 535 690 522 728 510C770 497 830 477 870 460C895 450 905 442 905 433C900 425 880 417 829 412C790 412 700 425 623 433C580 440 545 448 512 463L420 517Z" stroke-width="1.500"/>
        <path d="M508 515C510 508 515 503 520 500C535 490 550 480 566 473C585 462 605 455 627 450C660 440 695 432 728 427C760 422 790 418 813 418C845 417 870 420 880 428C887 435 887 445 877 457C855 475 830 485 796 493C770 505 740 515 711 522C680 530 640 537 600 537C570 540 535 540 520 532C510 527 507 520 508 515Z"/>
        <path d="M520 500C530 505 545 507 560 507C600 508 660 498 711 488C750 480 785 475 796 470C825 460 850 448 863 437C870 432 875 428 877 425"/>
        <path d="M515 510C515 518 525 523 540 525C570 528 600 527 640 522C680 517 700 511 728 507C760 500 790 490 812 480C840 468 865 455 877 443C883 436 883 430 877 425"/>
        <path d="M567 473L623 462C650 458 680 453 711 448C750 442 780 432 813 419"/>
        <path d="M600 462C620 452 654 443 728 428C750 425 770 422 782 421" stroke-width=".8"/>
        <path d="M623 452V462"/>
        <path d="M600 475C595 480 594 487 594 493C595 505 598 515 599 527L598 537"/>
        <path d="M600 540C650 536 700 527 740 515C790 500 830 485 872 463" stroke-width=".9"/>
      </g>
      <g class="triad">
        <path d="M1202 167C1205 155 1212 148 1219 149C1228 151 1235 160 1238 178C1240 188 1240 193 1239 198L1213 213Z" fill="url(#dithN)" stroke="#dcd0f4" stroke-width="2"/>
        <path d="M1242 138C1255 139 1268 147 1277 157C1282 164 1286 172 1288 178L1252 180Z" fill="url(#dithT)" stroke="#dcd0f4" stroke-width="2"/>
        <path d="M1252 180L1275 167C1283 166 1292 168 1297 174L1288 178Z" fill="url(#dithN)" stroke="#dcd0f4" stroke-width="2"/>
        <path d="M1285 167L1288 178" stroke="#dcd0f4" stroke-width="1.500"/>
        <path d="M1224 183L1252 181L1300 178" stroke="#dcd0f4" stroke-width="2"/>
        <circle cx="1300" cy="178" r="3" fill="#dcd0f4"/>
        <rect x="1215" y="179" width="9" height="9" fill="#e00010"/>
        <text x="1245" y="126" class="axis-y">x</text>
        <text x="1277" y="155" class="axis-y">y</text>
        <text x="1301" y="167" class="axis-y">z</text>
      </g>
      <g class="mini-axis">
        <path d="M1290 634V612M1290 634L1304 628M1290 634H1315" fill="none" stroke="#fff" stroke-width="1"/>
        <text x="1285" y="614" class="axis-w">x</text>
        <text x="1301" y="630" class="axis-w">y</text>
        <text x="1309" y="632" class="axis-w">z</text>
      </g>
    </svg>

    <div class="tree">
      <div class="row l0"><i class="node none"></i><i class="stub none"></i><svg class="t-icon"><use href="#gearc"/></svg><span class="label bare">PartBody</span></div>
      <div class="row l1"><i class="node minus"></i><i class="stub"></i><svg class="t-icon"><use href="#bodygear"/></svg><span class="label bare">Body.2</span></div>
      <div class="row l2"><i class="node"></i><i class="stub"></i><svg class="t-icon"><use href="#pad"/></svg><span class="label">Pad.1</span></div>
      <div class="row l2"><i class="node"></i><i class="stub"></i><svg class="t-icon"><use href="#shaft"/></svg><span class="label">Shaft.1</span></div>
      <div class="row l2"><i class="node"></i><i class="stub"></i><svg class="t-icon" viewBox="0 0 24 24"><rect width="24" height="24" fill="url(#dith)"/><path d="M1 18l7-6h15l-7 7z" fill="#f8e88a"/><path d="M1 19h14" stroke="#2f9ab0" stroke-width="3"/></svg><span class="label">Plane.1</span></div>
      <div class="row l2"><i class="node"></i><i class="stub"></i><svg class="t-icon"><use href="#pad"/></svg><span class="label">Pad.2</span></div>
      <div class="row l2"><i class="node"></i><i class="stub"></i><svg class="t-icon"><use href="#solid3"/></svg><span class="label">Draft.1</span></div>
      <div class="row l2"><i class="node"></i><i class="stub"></i><svg class="t-icon"><use href="#pocket"/></svg><span class="label">Pocket.1</span></div>
      <div class="row l2"><i class="node"></i><i class="stub"></i><svg class="t-icon"><use href="#pocket"/></svg><span class="label">Pocket.2</span></div>
      <div class="row l2"><i class="node"></i><i class="stub"></i><svg class="t-icon"><use href="#solid2"/></svg><span class="label">Chamfer.1</span></div>
      <div class="row l2"><i class="node"></i><i class="stub"></i><svg class="t-icon"><use href="#solid2"/></svg><span class="label">Chamfer.2</span></div>
      <div class="row l2"><i class="node"></i><i class="stub"></i><svg class="t-icon"><use href="#fillet"/></svg><span class="label">EdgeFillet.1</span></div>
      <div class="row l2"><i class="node"></i><i class="stub"></i><svg class="t-icon"><use href="#fillet"/></svg><span class="label">EdgeFillet.2</span></div>
      <div class="row l2"><i class="node"></i><i class="stub"></i><svg class="t-icon"><use href="#fillet"/></svg><span class="label">EdgeFillet.3</span></div>
      <div class="row l2"><i class="node"></i><i class="stub"></i><svg class="t-icon"><use href="#fillet"/></svg><span class="label">EdgeFillet.4</span></div>
      <div class="row l2 last"><i class="node"></i><i class="stub"></i><svg class="t-icon"><use href="#fillet"/></svg><span class="label current">EdgeFillet.5</span></div>
    </div>
  </section>

  <aside class="toolbar-v">
    <i class="vgrip v1"></i>
    <span class="vc"><svg><use href="#gearg"/></svg></span>
    <i class="vgrip v2"></i>
    <span class="vc h34 dd"><svg><use href="#sketch"/></svg></span>
    <i class="vgrip v3"></i>
    <span class="vc h30"><svg><use href="#graytool"/></svg></span>
    <span class="vc"><svg><use href="#cyansq"/></svg></span>
    <i class="vgrip v4"></i>
    <span class="vc h34 dd"><svg><use href="#cubeflag"/></svg></span>
    <i class="vgrip v5"></i>
    <span class="vc dd"><svg><use href="#pad"/></svg></span>
    <span class="vc h32 dd"><svg><use href="#pocket"/></svg></span>
    <span class="vc"><svg><use href="#shaft"/></svg></span>
    <span class="vc h30"><svg><use href="#groove"/></svg></span>
    <span class="vc h26"><svg><use href="#hole"/></svg></span>
    <span class="vc"><svg><use href="#rib"/></svg></span>
    <span class="vc"><svg><use href="#slot"/></svg></span>
    <span class="vc h30 dd"><svg><use href="#stiff"/></svg></span>
    <span class="vc"><svg><use href="#loft"/></svg></span>
    <span class="vc h32"><svg><use href="#loft2"/></svg></span>
  </aside>
</main>

<div class="toolbar bottom">
  <i class="grip g0"></i>
  <span class="ic w27"><svg><use href="#sfile"/></svg></span>
  <span class="ic"><svg><use href="#sfolder"/></svg></span>
  <span class="ic"><svg><use href="#sdisk"/></svg></span>
  <span class="ic"><svg><use href="#sprint"/></svg></span>
  <span class="ic"><svg><use href="#scut"/></svg></span>
  <span class="ic"><svg><use href="#scopy"/></svg></span>
  <span class="ic"><svg><use href="#spaste"/></svg></span>
  <span class="ic dd"><svg><use href="#sundo"/></svg></span>
  <span class="ic w32 dd"><svg><use href="#sredo"/></svg></span>
  <span class="ic"><svg viewBox="0 0 24 24"><path d="M1 3l11 9-5 1 3 7-3 1-3-7-3 3z" fill="#ffee50" stroke="#111"/><text x="11" y="17" class="q">?</text></svg></span>
  <i class="grip g1"></i>
  <span class="ic"><span class="fx">f<small>(x)</small></span></span>
  <span class="ic"><svg><use href="#ssay"/></svg></span>
  <span class="ic w22"><svg><use href="#slink"/></svg></span>
  <span class="ic dd"><svg><use href="#stable"/></svg></span>
  <span class="ic w34 dd"><svg><use href="#slock"/></svg></span>
  <span class="ic w24"><svg><use href="#sformula"/></svg></span>
  <i class="grip g2"></i>
  <span class="ic"><svg><use href="#sswap"/></svg></span>
  <i class="grip g3"></i>
  <span class="ic"><svg><use href="#smeasure"/></svg></span>
  <span class="ic w26"><svg><use href="#sclamp"/></svg></span>
  <span class="ic"><svg><use href="#sweight"/></svg></span>
  <i class="grip g4"></i>
  <span class="ic"><svg><use href="#scam"/></svg></span>
  <i class="grip g4"></i>
  <span class="ic w24"><svg><use href="#smat"/></svg></span>
  <span class="ic w34"><svg><use href="#smap"/></svg></span>
  <span class="ic w22"><svg><use href="#sscan"/></svg></span>
  <span class="ic w34"><svg><use href="#slayers"/></svg></span>
  <i class="grip g5"></i>
  <span class="ic w24"><svg><use href="#sbrush"/></svg></span>
  <i class="grip g6"></i>
  <span class="ic w26"><svg><use href="#sfly"/></svg></span>
  <span class="ic w30"><svg><use href="#sfit"/></svg></span>
  <span class="ic"><svg><use href="#span"/></svg></span>
  <span class="ic"><svg><use href="#srot"/></svg></span>
  <span class="ic w26"><svg><use href="#szoomi"/></svg></span>
  <span class="ic w32"><svg><use href="#szoomo"/></svg></span>
  <span class="ic w24"><svg><use href="#snormal"/></svg></span>
  <span class="ic w32"><svg><use href="#sview"/></svg></span>
  <span class="ic w24 dd"><svg><use href="#scube"/></svg></span>
  <span class="ic w36 dd"><svg><use href="#scyl"/></svg></span>
  <span class="ic w22"><svg><use href="#sdoc1"/></svg></span>
  <span class="ic w36"><svg><use href="#sdoc2"/></svg></span>
  <div class="logo">
    <svg class="logo-mark" viewBox="0 0 28 22"><path d="M8 1c5-1 9 1 5 5" fill="none" stroke="#e02020" stroke-width="1.500"/><path d="M14 6c-3 3 1 2 0 5" fill="none" stroke="#e02020" stroke-width="1.500"/><path d="M2 21L7 8c8-1 9 5 4 10z" fill="none" stroke="#2a2a80" stroke-width="1.500"/><path d="M26 5c-8-2-10 3-6 6s2 8-6 7" fill="none" stroke="#f09020" stroke-width="1.800"/></svg>
    <span class="logo-text">CATIA</span>
  </div>
</div>

<footer class="statusbar">
  <span class="status-text">Select an object or a command</span>
  <div class="status-input"></div>
  <span class="status-btn wide"><svg><use href="#sstack"/></svg></span>
  <span class="status-btn"><svg><use href="#sinfo"/></svg></span>
</footer>
<div class="taskstrip"></div>
</body>
</html>
```
FILE: styles.css
```css
* { box-sizing: border-box; }
html, body { margin: 0; height: 727px; overflow: hidden; }
body {
  width: 1363px;
  display: flex;
  flex-direction: column;
  font-family: "Noto Sans", "Liberation Sans", sans-serif;
  font-size: 12px;
  background: #d0d0e6;
}
.defs { position: absolute; }
svg { display: block; }

.tiny { font: 700 7px "Liberation Sans", sans-serif; fill: #14145a; }
.big { font: 700 16px "Liberation Sans", sans-serif; fill: #444; }
.q { font: 700 20px "Liberation Sans", sans-serif; fill: #123a70; }

/* title bar */
.titlebar { height: 20px; flex: none; display: flex; align-items: center; background: #0a0a6e; color: #fff; }
.app-icon { width: 14px; height: 14px; flex: none; }
.title-text { margin-left: 6px; font-size: 11.7px; }
.win-btns { margin-left: auto; display: flex; margin-right: 1px; }
.win-btn { width: 46px; height: 20px; }

/* menu */
.menubar { height: 19px; flex: none; display: flex; align-items: center; background: #d0d0e6; color: #111; position: relative; }
.menu-icon { width: 16px; height: 18px; }
.menu { height: 100%; display: flex; align-items: center; white-space: pre; }
.menu u { text-underline-offset: 1px; }
.start { width: 47px; margin-left: 2px; padding-left: 7px; background: #ffe0b8; }
.file { margin-left: 8px; width: 42px; }
.edit { width: 44px; }
.view { width: 49px; }
.insert { width: 53px; }
.tools { width: 53px; }
.window { width: 68px; }
.mdi { margin-left: auto; display: flex; gap: 3px; align-self: flex-end; margin-right: 1px; }
.mdi-btn { width: 17px; height: 19px; background: #f0f0f8; display: flex; align-items: center; justify-content: center; color: #555; font-weight: 700; font-size: 11px; }
.mdi-min { width: 6px; height: 2px; background: #666; margin-top: 6px; }
.mdi-res { width: 8px; height: 8px; border: 1px solid #666; border-top-width: 2px; }

/* toolbars */
.toolbar { flex: none; display: flex; align-items: center; }
.toolbar.top {
  height: 38px;
  padding: 0 0 0 109px;
  background: linear-gradient(#eeeef8 0, #f4f4fc 8%, #dcdcec 40%, #cfcfe2 70%, #a8a8be 94%, #5c5c6c 95%, #5c5c6c 100%);
}
.toolbar.bottom {
  height: 37px;
  padding: 2px 0 0 3px;
  background: linear-gradient(#c8c8dc 0, #f4f4fc 12%, #dcdcec 45%, #c8c8dc 75%, #a8a8be 96%, #55556a 97%);
}
.tgroup { display: flex; align-items: center; }
.gb { margin-left: 69px; }
.gc { margin-left: 10px; }
.gd { margin-left: 13px; }
.ge { margin-left: 12px; }
.gf { margin-left: 11px; }
.grip { width: 3px; height: 18px; flex: none; margin-right: 6px; background: #b4b4c4; border-right: 1px solid #fff; }
.tgroup .grip { margin-top: -13px; }
.toolbar.bottom .grip { margin-top: -12px; }
.g1 { margin-left: 10px; }
.g2 { margin-left: 32px; }
.g3 { margin-left: 10px; }
.g4 { margin-left: 11px; }
.g5 { margin-left: 8px; }
.g6 { margin-left: 21px; }
.vsep { width: 1px; height: 36px; flex: none; margin: 0 4px; background: #fff; }
.ic { width: 28px; height: 30px; flex: none; display: flex; align-items: center; justify-content: center; position: relative; }
.ic svg, .vc svg { width: 24px; height: 24px; flex: none; filter: drop-shadow(2px 3px 0 rgba(110, 110, 130, .22)); }
.w22 { width: 22px; } .w24 { width: 24px; } .w26 { width: 26px; } .w27 { width: 27px; }
.w29 { width: 29px; } .w30 { width: 30px; } .w31 { width: 31px; } .w32 { width: 32px; }
.w34 { width: 34px; } .w36 { width: 36px; }
.dd::after {
  content: "";
  position: absolute;
  left: calc(50% + 8px);
  bottom: 0;
  border-left: 4px solid transparent;
  border-right: 4px solid transparent;
  border-top: 4px solid #111;
}
.body-select {
  width: 164px; height: 22px; flex: none; display: flex; align-items: center; justify-content: space-between;
  padding: 0 7px 0 4px; background: #dcdcdc; border: 1px solid #c0c0c0; color: #222;
}
.chev { width: 10px; height: 6px; }
.fx { font: italic 700 18px "Liberation Serif", serif; color: #111; white-space: nowrap; }
.fx small { font-size: 11px; font-style: normal; }

/* workspace */
.workspace { flex: none; height: 586px; display: flex; min-height: 0; }
.scrollbar { width: 15px; flex: none; display: flex; flex-direction: column; background: #7a78f8; border-right: 1px solid #38355f; }
.sb-btn { height: 15px; flex: none; display: flex; align-items: center; justify-content: center; background: #7a78f8; }
.tri-up { border: 5px solid transparent; border-bottom: 7px solid #111; border-top: 0; }
.tri-down { border: 5px solid transparent; border-top: 7px solid #111; border-bottom: 0; }
.sb-thumb {
  height: 125px; flex: none; border-bottom: 1px solid #d0d0f0;
  background: repeating-conic-gradient(#6666dc 0 25%, #9c9cc0 0 50%) 0 0 / 2px 2px;
}
.sb-track { flex: 1; background: #7a78f8; }

.viewport {
  flex: 1; position: relative; overflow: hidden; border-top: 1px solid #38355f;
  background: linear-gradient(#37345f 0, #403f6c 55%, #4e4e78 70%, #7d7d9f 85%, #adadc5 100%);
}
.model { position: absolute; left: 0; top: -1px; }
.axis-y { font: 11px "Noto Sans", sans-serif; fill: #f4e400; }
.axis-w { font: 11px "Noto Sans", sans-serif; fill: #fff; }

.tree { position: absolute; left: 0; top: -16px; color: #fff; font-size: 13px; }
.row { height: 28.8px; display: flex; position: relative; align-items: flex-start; }
.row::before { content: ""; position: absolute; width: 2px; background: #fff; }
.l0::before { left: 6px; top: 0; bottom: 0; }
.l1::before { left: 6px; top: 0; height: 6px; }
.l1::after { content: ""; position: absolute; left: 27px; top: 22px; bottom: 0; width: 2px; background: #fff; }
.l2::before { left: 27px; top: 0; bottom: 0; }
.l2.last::before { bottom: auto; height: 12px; }
.l0, .l1 { padding-left: 1px; }
.l2 { padding-left: 22px; }
.node {
  width: 13px; height: 13px; flex: none; margin-top: 3px; position: relative; border-radius: 50%;
  background: radial-gradient(circle at 40% 35%, #e0e0e0, #5a5a5a);
}
.node::before { content: ""; position: absolute; left: 1px; right: 1px; top: 5px; height: 2px; background: #111; }
.node::after { content: ""; position: absolute; top: 1px; bottom: 1px; left: 5px; width: 2px; background: #111; }
.node.minus { margin-top: 4px; }
.node.minus::after { display: none; }
.node.none { visibility: hidden; }
.stub { width: 7px; height: 2px; flex: none; margin-top: 9px; background: #fff; }
.stub.none { visibility: hidden; }
.t-icon { width: 22px; height: 22px; flex: none; margin-top: -2px; position: relative; }
.l0 .t-icon, .l1 .t-icon { margin-top: -1px; }
.label { margin: 4px 0 0 3px; padding: 0 1px; height: 21px; line-height: 21px; background: #33305f; border-radius: 2px; white-space: nowrap; }
.label.bare { background: none; margin-left: 1px; padding: 0 2px; }
.label.current { text-decoration: underline; text-underline-offset: 2px; }

/* right toolbar */
.toolbar-v {
  width: 36px; flex: none; display: flex; flex-direction: column; align-items: flex-start;
  background: linear-gradient(90deg, #d4d4e6 0, #eeeef8 25%, #d8d8e8 70%, #9a9ab0 100%);
}
.vgrip { width: 17px; height: 3px; flex: none; margin: 0 0 4px 3px; background: #b4b4c4; border-bottom: 1px solid #fff; }
.v1 { margin-top: 5px; }
.v2 { margin-top: 14px; }
.v3 { margin-top: 59px; }
.v4 { margin-top: 14px; }
.v5 { margin-top: 10px; }
.vc { width: 36px; height: 28px; flex: none; display: flex; align-items: center; justify-content: center; padding-right: 1px; position: relative; }
.vc.dd::after { left: 26px; bottom: 0; }
.h26 { height: 26px; } .h30 { height: 30px; } .h32 { height: 32px; } .h34 { height: 34px; }

/* logo */
.logo { margin-left: auto; margin-right: 7px; width: 40px; height: 34px; display: flex; flex-direction: column; align-items: center; }
.logo-mark { width: 26px; height: 21px; }
.logo-text { font: italic 700 12px/12px "Liberation Sans", sans-serif; color: #2a2a80; letter-spacing: .3px; }

/* status */
.statusbar { height: 25px; flex: none; display: flex; align-items: center; background: #d0d0e6; color: #111; }
.status-text { font-size: 11.3px; margin-top: -2px; }
.status-input { width: 300px; height: 21px; margin-left: auto; background: #fff; border: 1px solid #a0a0b0; }
.status-btn { width: 34px; height: 21px; flex: none; margin: 0 2px 0 1px; display: flex; align-items: center; justify-content: center; background: #e0e0ec; border: 1px solid #fff; border-right-color: #888; border-bottom-color: #888; }
.status-btn.wide { width: 30px; margin: 0; }
.status-btn svg { width: 18px; height: 18px; }
.taskstrip { flex: 1; background: #0a0a4a; }
```
